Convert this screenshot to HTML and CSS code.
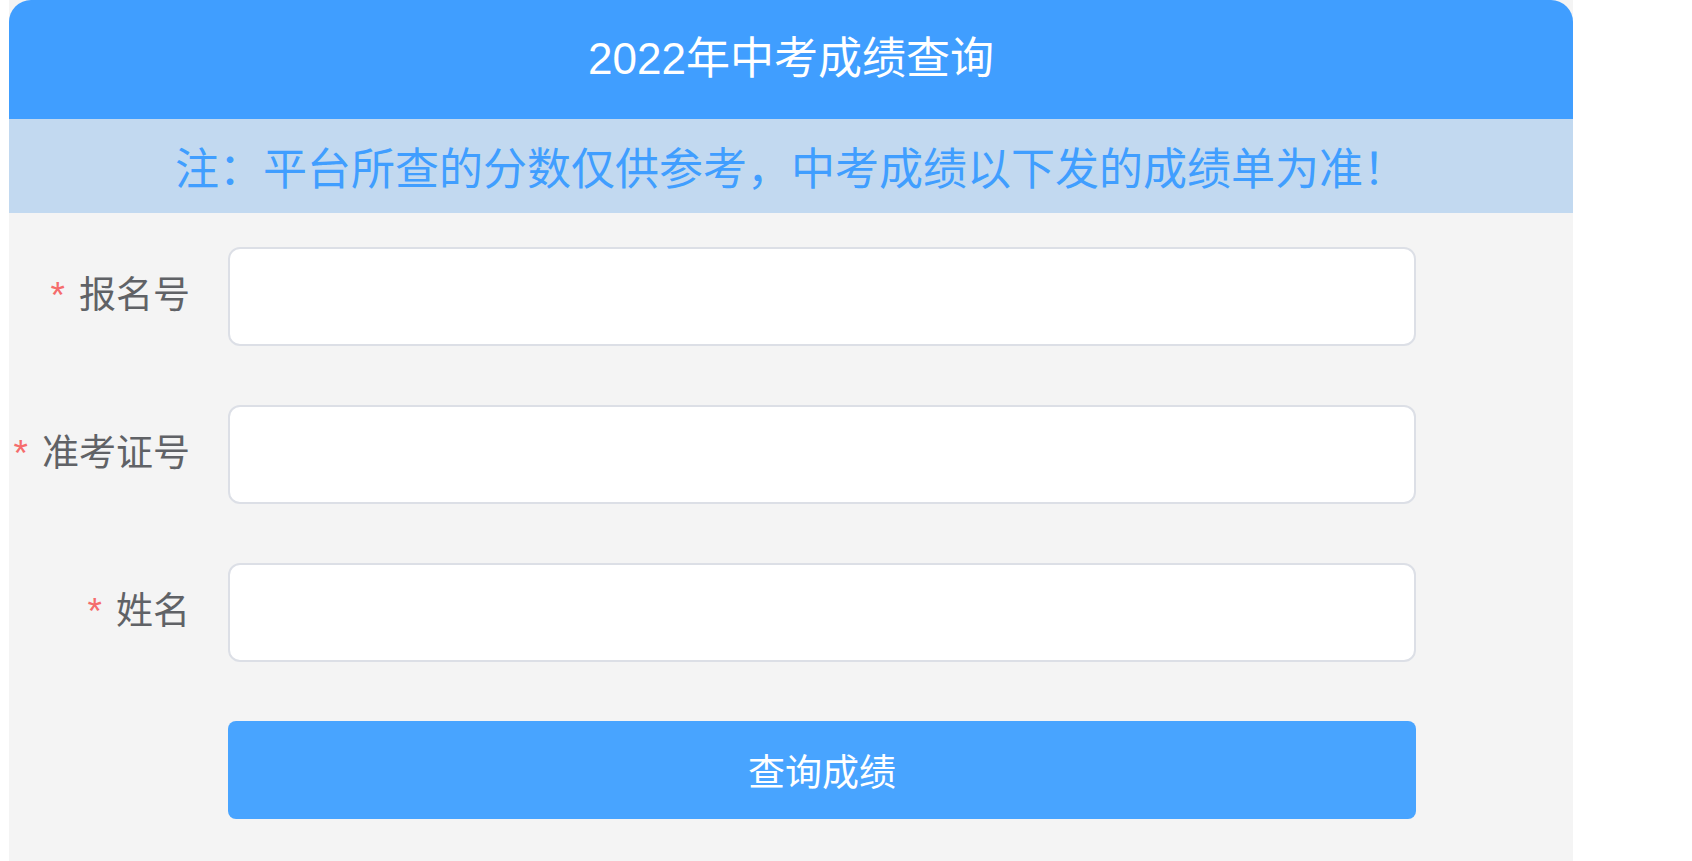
FILE: index.html
```html
<!DOCTYPE html>
<html lang="zh-CN">

<head>
    <meta charset="UTF-8">
    <meta name="viewport" content="width=device-width, initial-scale=1.0">
    <title>2022年中考成绩查询</title>
    <link rel="stylesheet" href="styles.css">
</head>

<body>
    <div class="container">
        <div class="header">2022年中考成绩查询</div>
        <div class="notice">注：平台所查的分数仅供参考，中考成绩以下发的成绩单为准！</div>

        <form class="form" onsubmit="return false;">
            <div class="form-item">
                <label class="label required" for="regNo">报名号</label>
                <input class="input" type="text" id="regNo">
            </div>
            <div class="form-item">
                <label class="label required" for="examNo">准考证号</label>
                <input class="input" type="text" id="examNo">
            </div>
            <div class="form-item">
                <label class="label required" for="name">姓名</label>
                <input class="input" type="text" id="name">
            </div>
            <div class="form-item">
                <span class="label"></span>
                <button class="btn" type="submit">查询成绩</button>
            </div>
        </form>
    </div>
</body>

</html>
```
FILE: styles.css
```css
body {
    font-family: "Liberation Sans", "Noto Sans CJK SC", sans-serif;
    background-color: #fff;
    margin: 0;
}

.container {
    width: 1564px;
    margin-left: 9px;
    min-height: 861px;
    background-color: #f4f4f4;
}

.header {
    height: 119px;
    box-sizing: border-box;
    padding-bottom: 10px;
    background-color: #409eff;
    color: #fff;
    font-size: 44px;
    border-radius: 22px 22px 0 0;
    display: flex;
    justify-content: center;
    align-items: center;
}

.notice {
    height: 94px;
    background-color: #c2d9f0;
    color: #409eff;
    font-size: 44px;
    display: flex;
    justify-content: center;
    align-items: center;
}

.form {
    padding-top: 34px;
}

.form-item {
    display: flex;
    align-items: center;
    margin-bottom: 59px;
}

.label {
    width: 181px;
    padding-right: 38px;
    padding-bottom: 10px;
    text-align: right;
    font-size: 37px;
    color: #606266;
    flex-shrink: 0;
}

.required::before {
    content: "*";
    color: #f56c6c;
    margin-right: 14px;
}

.input {
    width: 1188px;
    height: 99px;
    box-sizing: border-box;
    border: 2px solid #dcdfe6;
    border-radius: 12px;
    background-color: #fff;
    padding: 0 20px;
    font-size: 32px;
    outline: none;
}

.btn {
    width: 1188px;
    height: 98px;
    border: none;
    border-radius: 8px;
    background-color: #48a4ff;
    color: #fff;
    font-family: inherit;
    font-size: 37px;
    cursor: pointer;
}
```
